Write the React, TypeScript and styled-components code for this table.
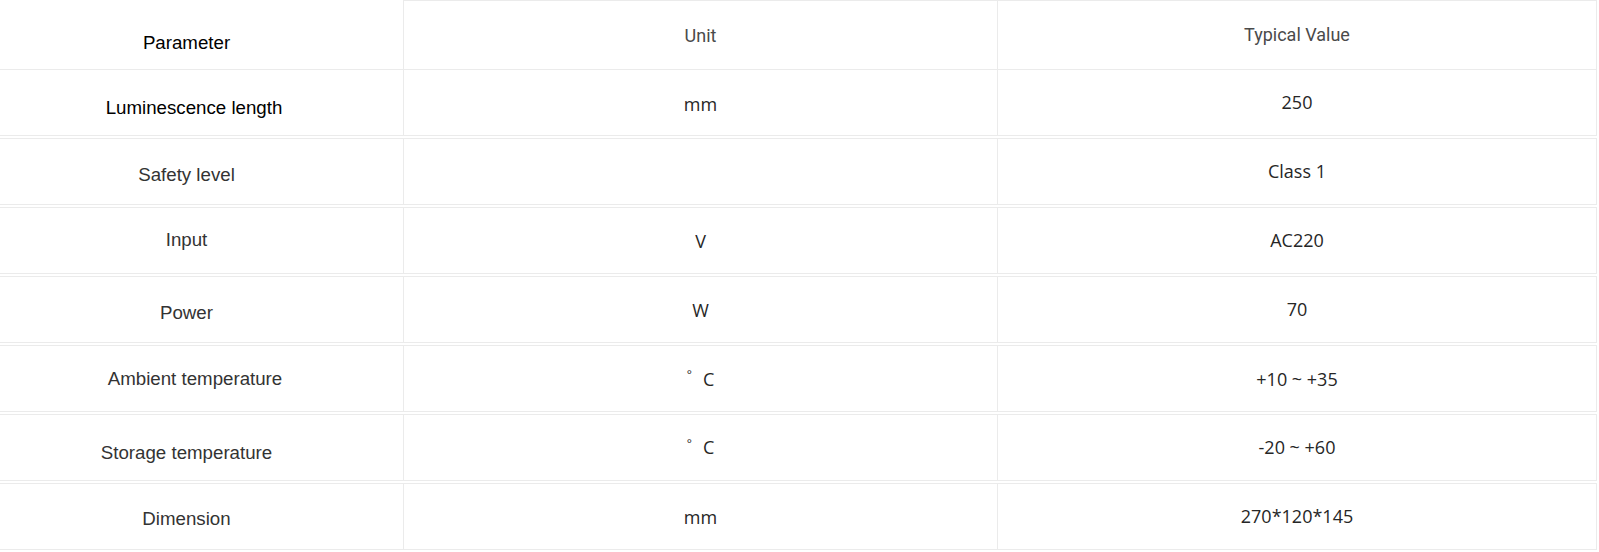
import React from "react";
import styled, { createGlobalStyle, css } from "styled-components";

const Global = createGlobalStyle`
  html, body { margin: 0; padding: 0; background: #fff; }
  body { font-family: "Liberation Sans", Arial, sans-serif; }
`;

const LINE = "#ebebeb";

const Table = styled.div`
  width: 1597px;
  display: flex;
  flex-direction: column;
`;

const Row = styled.div<{ $split?: boolean; $h: number }>`
  display: grid;
  grid-template-columns: 403px 594px 600px;
  height: ${(p) => p.$h}px;
  border-bottom: 1px solid ${LINE};
  ${(p) =>
    p.$split &&
    css`
      margin-top: 2px;
      border-top: 1px solid ${LINE};
    `}
`;

type Kind = "label" | "labelDark" | "head" | "value";

const Cell = styled.div<{ $kind: Kind; $dy?: number; $shift?: number; $top?: boolean }>`
  display: flex;
  align-items: center;
  justify-content: center;
  box-sizing: border-box;
  white-space: pre;
  padding-top: ${(p) => Math.max(0, (p.$dy || 0) * 2)}px;
  padding-bottom: ${(p) => Math.max(0, -(p.$dy || 0) * 2)}px;
  ${(p) => p.$top && css`border-top: 1px solid ${LINE};`}
  ${(p) =>
    p.$kind === "label" || p.$kind === "labelDark"
      ? css`
          font-family: "Liberation Sans", Arial, sans-serif;
          font-size: 18.7px;
          color: ${p.$kind === "labelDark" ? "#000" : "#333"};
          padding-right: ${p.$shift ?? 30}px;
        `
      : p.$kind === "head"
      ? css`
          font-family: Roboto, "Liberation Sans", sans-serif;
          font-size: 18px;
          color: #4a4a4a;
          border-left: 1px solid ${LINE};
        `
      : css`
          font-family: "Open Sans", "Noto Sans", sans-serif;
          font-size: 18px;
          color: #262626;
          border-left: 1px solid ${LINE};
        `}
  &:last-child {
    border-right: 1px solid ${LINE};
  }
`;

const Deg = styled.span`
  font-size: 12px;
  position: relative;
  top: -4px;
  margin-right: 11px;
`;

type R = {
  p: string;
  u: React.ReactNode;
  v: string;
  dy: [number, number, number];
  shift?: number;
  dark?: boolean;
};

const degC = (
  <>
    <Deg>°</Deg>C
  </>
);

const rows: R[] = [
  { p: "Luminescence length", u: "mm", v: "250", dy: [5, 1, -0.5], shift: 15, dark: true },
  { p: "Safety level", u: "", v: "Class 1", dy: [3, 0, -0.5] },
  { p: "Input", u: "V", v: "AC220", dy: [-0.5, 0.5, -0.5] },
  { p: "Power", u: "W", v: "70", dy: [3, 0, -0.5] },
  { p: "Ambient temperature", u: degC, v: "+10 ~ +35", dy: [0.5, 0, 0], shift: 13 },
  { p: "Storage temperature", u: degC, v: "-20 ~ +60", dy: [5, -0.5, -0.5] },
  { p: "Dimension", u: "mm", v: "270*120*145", dy: [2, 0.5, -0.5] },
];

export default function App() {
  return (
    <>
      <Global />
      <Table>
        <Row $h={69}>
          <Cell $kind="labelDark" $dy={8.5}>
            Parameter
          </Cell>
          <Cell $kind="head" $top>
            Unit
          </Cell>
          <Cell $kind="head" $top $dy={-0.5}>
            Typical Value
          </Cell>
        </Row>
        {rows.map((r, i) => (
          <Row key={r.p} $h={65} $split={i > 0}>
            <Cell $kind={r.dark ? "labelDark" : "label"} $dy={r.dy[0]} $shift={r.shift}>
              {r.p}
            </Cell>
            <Cell $kind="value" $dy={r.dy[1]}>
              {r.u}
            </Cell>
            <Cell $kind="value" $dy={r.dy[2]}>
              {r.v}
            </Cell>
          </Row>
        ))}
      </Table>
    </>
  );
}
